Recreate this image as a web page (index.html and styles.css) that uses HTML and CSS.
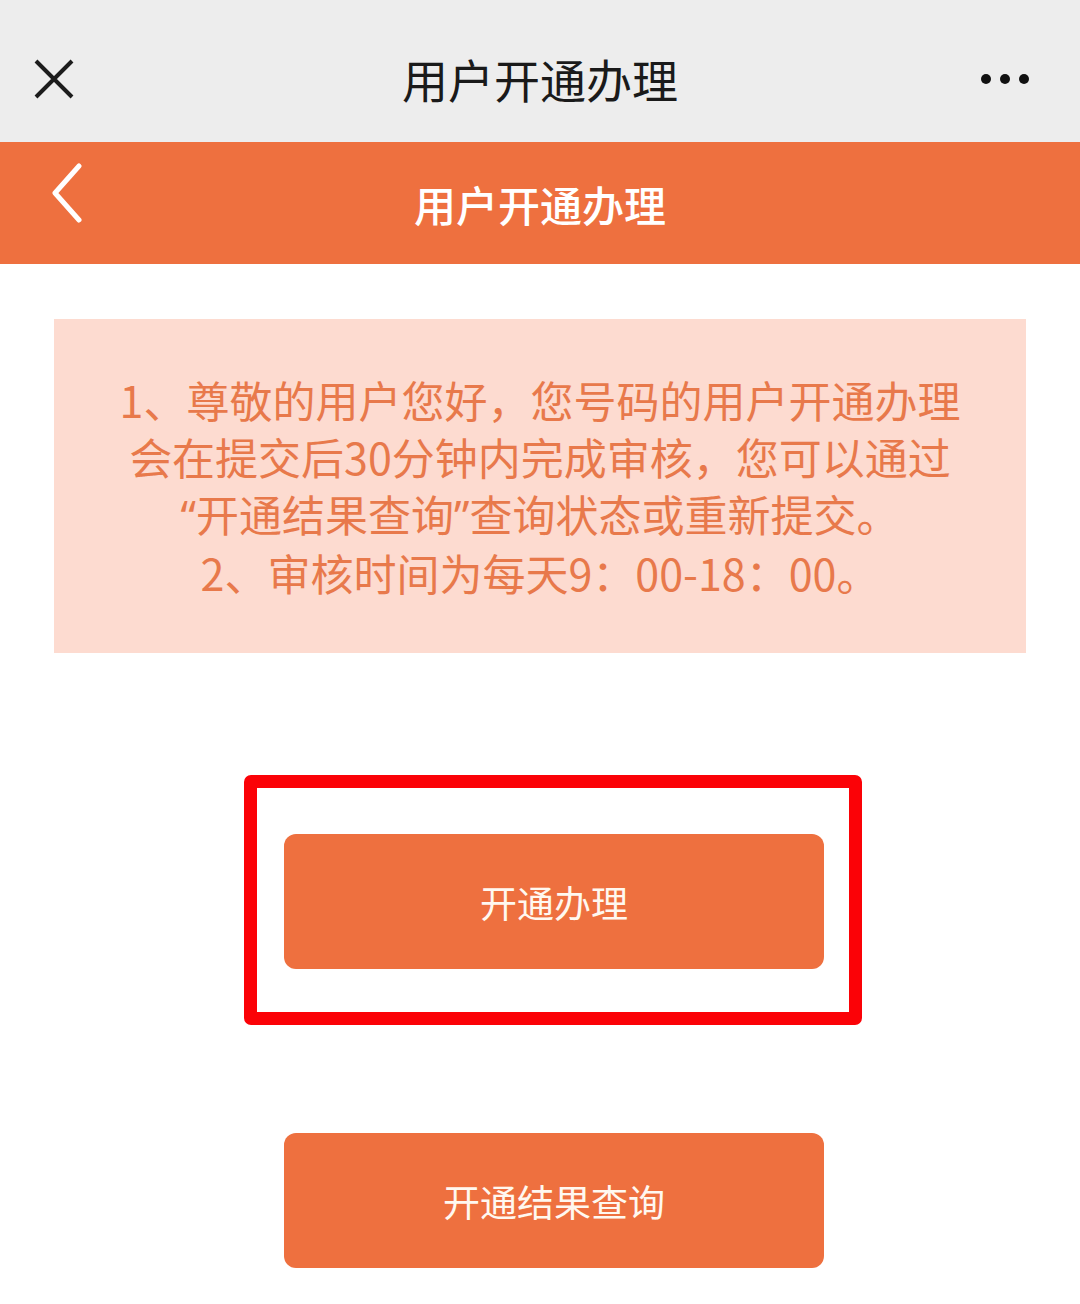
FILE: index.html
```html
<!DOCTYPE html>
<html lang="zh-CN">
<head>
    <meta charset="UTF-8">
    <title>用户开通办理</title>
    <link rel="stylesheet" href="styles.css">
</head>
<body>
<div class="topbar">
    <svg class="close" width="40" height="40" viewBox="0 0 40 40">
        <path d="M2 2 L38 38 M38 2 L2 38" stroke="#1c1c1c" stroke-width="4" fill="none"/>
    </svg>
    <h1 class="top-title">用户开通办理</h1>
    <svg class="more" width="52" height="12" viewBox="0 0 52 12">
        <circle cx="7" cy="6" r="5" fill="#111"/>
        <circle cx="26" cy="6" r="5" fill="#111"/>
        <circle cx="45" cy="6" r="5" fill="#111"/>
    </svg>
</div>
<div class="header">
    <svg class="back" width="34" height="60" viewBox="0 0 34 60">
        <path d="M29 3 L5 30 L29 57" stroke="#fff" stroke-width="5" fill="none" stroke-linecap="round" stroke-linejoin="round"/>
    </svg>
    <h2 class="header-title">用户开通办理</h2>
</div>
<div class="content">
    <div class="notice">
        <p>1、尊敬的用户您好，您号码的用户开通办理<br>会在提交后30分钟内完成审核，您可以通过<br><span class="q">“</span>开通结果查询<span class="q">”</span>查询状态或重新提交。<br>2、审核时间为每天9：00-18：00。</p>
    </div>
    <div class="mark">
        <a class="btn" href="javascript:;">开通办理</a>
    </div>
    <a class="btn btn-query" href="javascript:;">开通结果查询</a>
</div>
</body>
</html>
```

FILE: styles.css
```css
* {
    margin: 0;
    padding: 0;
    box-sizing: border-box;
    font-family: "Noto Sans CJK SC", "Noto Sans", sans-serif;
}

body {
    width: 1080px;
    height: 1304px;
    background: #fff;
    overflow: hidden;
}

.topbar {
    position: relative;
    height: 142px;
    background: #ededed;
    display: flex;
    align-items: center;
    justify-content: center;
}

.close {
    position: absolute;
    left: 34px;
    top: 59px;
}

.more {
    position: absolute;
    left: 979px;
    top: 73px;
}

.top-title {
    font-size: 46px;
    font-weight: 400;
    color: #1a1a1a;
    margin-top: 14px;
}

.header {
    position: relative;
    height: 122px;
    background: #ee703f;
    display: flex;
    align-items: center;
    justify-content: center;
}

.back {
    position: absolute;
    left: 50px;
    top: 21px;
}

.header-title {
    font-size: 42px;
    font-weight: 500;
    color: #fff;
}

.content {
    display: flex;
    flex-direction: column;
    align-items: center;
    padding-top: 55px;
}

.notice {
    width: 972px;
    height: 334px;
    background: #fddbd0;
    display: flex;
    align-items: center;
    justify-content: center;
}

.notice p {
    font-size: 43px;
    line-height: 57px;
    color: #e8794b;
    text-align: center;
}

/* 引号用半角字形 */
.notice .q {
    font-family: "Noto Sans", sans-serif;
}

.mark {
    margin-top: 122px;
    margin-left: 26px;
    width: 618px;
    height: 250px;
    border: 13px solid #fb0207;
    border-radius: 7px;
    padding: 46px 26px 0 27px;
}

.btn {
    display: flex;
    align-items: center;
    justify-content: center;
    width: 540px;
    height: 135px;
    background: #ee703f;
    border-radius: 12px;
    color: #fff8f0;
    font-size: 37px;
    text-decoration: none;
}

.btn-query {
    margin-top: 108px;
    margin-left: 28px;
}
```
